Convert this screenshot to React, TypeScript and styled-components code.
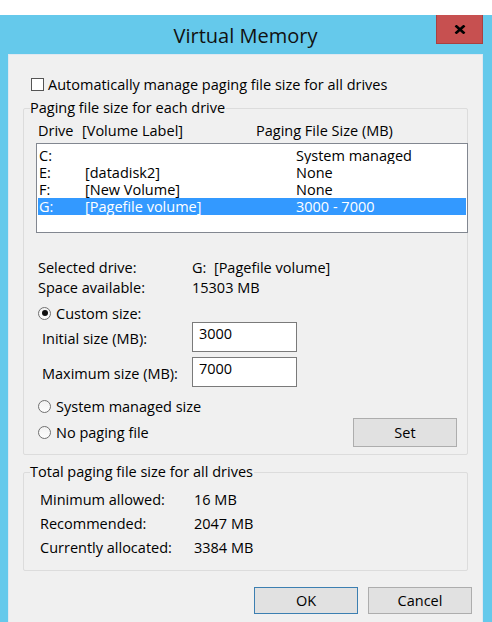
import styled, {createGlobalStyle} from "styled-components";

type Drive = {
  letter: string;
  label: string;
  size: string;
  selected?: boolean;
}

const drives: Drive[] = [
  {letter: 'C:', label: '', size: 'System managed'},
  {letter: 'E:', label: '[datadisk2]', size: 'None'},
  {letter: 'F:', label: '[New Volume]', size: 'None'},
  {letter: 'G:', label: '[Pagefile volume]', size: '3000 - 7000', selected: true},
];

const totals = [
  {label: 'Minimum allowed:', value: '16 MB'},
  {label: 'Recommended:', value: '2047 MB'},
  {label: 'Currently allocated:', value: '3384 MB'},
];

const GlobalStyle = createGlobalStyle`
  html, body {
    margin: 0;
    padding: 0;
    background: #ffffff;
  }
  body {
    font-family: "Open Sans", "Noto Sans", sans-serif;
    font-size: 14.5px;
    color: #000;
  }
`;

const Window = styled.div`
  margin-top: 15px;
  height: 607px;
  background: #65c9eb;
  padding: 0 9px 0 8px;
  display: flex;
  flex-direction: column;
  overflow: hidden;
`;

const TitleBar = styled.div`
  height: 39px;
  display: grid;
  grid-template-columns: 47px 1fr 47px;
  align-items: start;
`;

const Title = styled.h1`
  grid-column: 2;
  margin: 0;
  font-weight: 400;
  font-size: 20px;
  line-height: 29px;
  padding-top: 6px;
  text-align: center;
  color: #111;
`;

const CloseButton = styled.div`
  height: 29px;
  background: #c75050;
  border: 1px solid #a94040;
  border-top: none;
  box-sizing: border-box;
  display: flex;
  align-items: center;
  justify-content: center;
`;

const Client = styled.div`
  flex: 1;
  background: #f0f0f0;
  border: 1px solid #dfe8f1;
  border-bottom: none;
  padding: 19px 0 0;
  display: flex;
  flex-direction: column;
`;

const CheckRow = styled.label`
  display: flex;
  align-items: center;
  gap: 4px;
  height: 20px;
  padding-left: 22px;
`;

const CheckBox = styled.span`
  width: 13px;
  height: 13px;
  box-sizing: border-box;
  border: 1px solid #555;
  background: #fff;
`;

const Group = styled.fieldset<{ $top?: number; $bottom: number }>`
  margin: ${(p) => p.$top ?? 4}px 14px 0;
  padding: 0 0 ${(p) => p.$bottom}px 6px;
  border: 1px solid #dcdcdc;
  border-radius: 2px;
  min-width: 0;
`;

const Legend = styled.legend`
  padding: 0 1px 0 0;
  line-height: 20px;
`;

const HeaderRow = styled.div`
  margin-top: 2px;
  height: 20px;
  display: grid;
  grid-template-columns: 44px 174px 1fr;
  align-items: center;
  padding-left: 8px;
`;

const DriveList = styled.div`
  margin: 3px -1px 0 6px;
  height: 90px;
  box-sizing: border-box;
  border: 1px solid #828790;
  background: #fff;
  padding: 3px 1px 0;
`;

const DriveRow = styled.div<{ $selected?: boolean }>`
  height: 17px;
  line-height: 17px;
  display: grid;
  grid-template-columns: 46px 211px 1fr;
  padding-left: 1px;
  overflow: hidden;
  background: ${(p) => (p.$selected ? '#3399ff' : 'transparent')};
  color: ${(p) => (p.$selected ? '#fff' : '#000')};
`;

const InfoRow = styled.div<{ $first?: boolean }>`
  margin-top: ${(p) => (p.$first ? 24 : 0)}px;
  height: 20px;
  display: grid;
  grid-template-columns: 154px 1fr;
  align-items: center;
  padding-left: 8px;
`;

const RadioRow = styled.label<{ $top: number; $height?: number }>`
  margin-top: ${(p) => p.$top}px;
  height: ${(p) => p.$height ?? 20}px;
  display: flex;
  align-items: center;
  gap: 5px;
  padding-left: 8px;
`;

const Radio = styled.span<{ $checked?: boolean }>`
  width: 13px;
  height: 13px;
  box-sizing: border-box;
  border-radius: 50%;
  border: 1px solid #707070;
  background: linear-gradient(#f2f2f2, #fdfdfd);
  display: flex;
  align-items: center;
  justify-content: center;

  &::after {
    content: '';
    display: ${(p) => (p.$checked ? 'block' : 'none')};
    width: 6px;
    height: 6px;
    border-radius: 50%;
    background: #111;
  }
`;

const SizeRow = styled.div<{ $top: number }>`
  margin-top: ${(p) => p.$top}px;
  display: grid;
  grid-template-columns: 150px 105px;
  align-items: center;
  padding-left: 12px;
`;

const SizeLabel = styled.span`
  padding-top: 3px;
`;

const SizeInput = styled.div`
  height: 30px;
  box-sizing: border-box;
  border: 1px solid #7a7a7a;
  background: #fff;
  padding: 1px 0 0 6px;
  line-height: 20px;
`;

const LastRow = styled.div`
  margin-top: 2px;
  display: flex;
  align-items: center;
  justify-content: space-between;
  padding-right: 10px;
`;

const Button = styled.button<{ $focused?: boolean }>`
  width: 104px;
  height: 29px;
  box-sizing: border-box;
  border: 1px solid ${(p) => (p.$focused ? '#3c7fb1' : '#adadad')};
  background: #e1e1e1;
  font: inherit;
  color: #000;
  padding: 0;
`;

const TotalRow = styled.div<{ $first?: boolean }>`
  margin-top: ${(p) => (p.$first ? 5 : 0)}px;
  height: 24px;
  display: grid;
  grid-template-columns: 154px 1fr;
  align-items: center;
  padding-left: 10px;
`;

const Footer = styled.div`
  margin-top: 16px;
  display: flex;
  justify-content: flex-end;
  gap: 10px;
  padding-right: 10px;

  & > button {
    height: 27px;
  }
`;

function App() {
  return (
    <>
      <GlobalStyle/>
      <Window>
        <TitleBar>
          <Title>Virtual Memory</Title>
          <CloseButton>
            <svg width="12" height="9" viewBox="0 0 12 9">
              <path d="M1.5 0.5 L10.5 8.5 M10.5 0.5 L1.5 8.5" stroke="#000" strokeWidth="2.6"/>
            </svg>
          </CloseButton>
        </TitleBar>
        <Client>
          <CheckRow>
            <CheckBox/>
            Automatically manage paging file size for all drives
          </CheckRow>

          <Group $bottom={7}>
            <Legend>Paging file size for each drive</Legend>
            <HeaderRow>
              <span>Drive</span>
              <span>[Volume Label]</span>
              <span>Paging File Size (MB)</span>
            </HeaderRow>
            <DriveList>
              {drives.map((d) => (
                <DriveRow key={d.letter} $selected={d.selected}>
                  <span>{d.letter}</span>
                  <span>{d.label}</span>
                  <span>{d.size}</span>
                </DriveRow>
              ))}
            </DriveList>

            <InfoRow $first>
              <span>Selected drive:</span>
              <span>G:&nbsp;&nbsp;[Pagefile volume]</span>
            </InfoRow>
            <InfoRow>
              <span>Space available:</span>
              <span>15303 MB</span>
            </InfoRow>

            <RadioRow $top={7} $height={18}>
              <Radio $checked/>
              Custom size:
            </RadioRow>
            <SizeRow $top={0}>
              <SizeLabel>Initial size (MB):</SizeLabel>
              <SizeInput>3000</SizeInput>
            </SizeRow>
            <SizeRow $top={5}>
              <SizeLabel>Maximum size (MB):</SizeLabel>
              <SizeInput>7000</SizeInput>
            </SizeRow>

            <RadioRow $top={9}>
              <Radio/>
              System managed size
            </RadioRow>
            <LastRow>
              <RadioRow $top={0}>
                <Radio/>
                No paging file
              </RadioRow>
              <Button>Set</Button>
            </LastRow>
          </Group>

          <Group $top={7} $bottom={11}>
            <Legend>Total paging file size for all drives</Legend>
            {totals.map((t, i) => (
              <TotalRow key={t.label} $first={i === 0}>
                <span>{t.label}</span>
                <span>{t.value}</span>
              </TotalRow>
            ))}
          </Group>

          <Footer>
            <Button $focused>OK</Button>
            <Button>Cancel</Button>
          </Footer>
        </Client>
      </Window>
    </>
  );
}

export default App;
